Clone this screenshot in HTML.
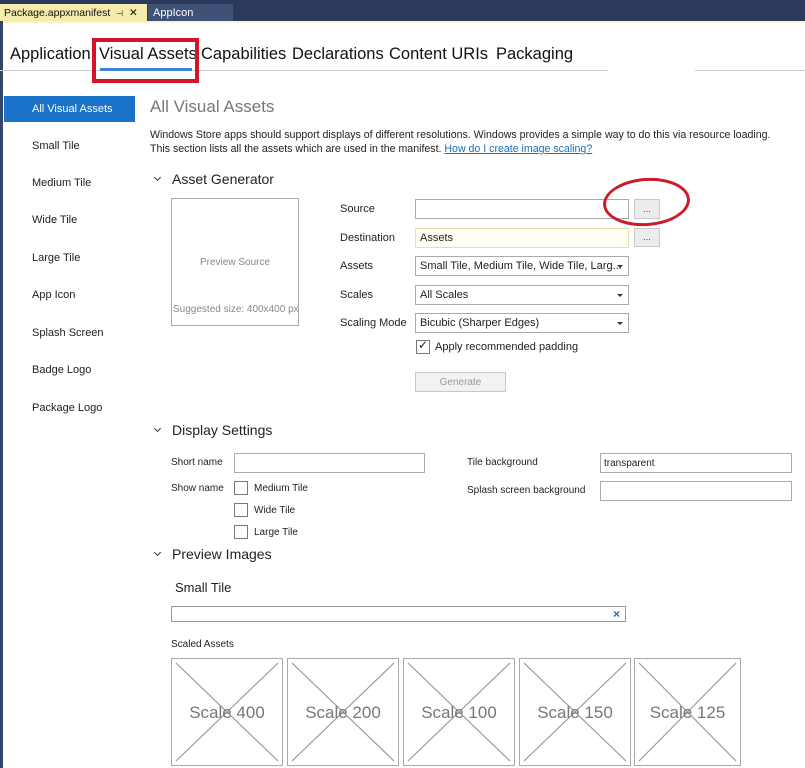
<!DOCTYPE html>
<html><head><meta charset="utf-8"><style>
*{margin:0;padding:0;box-sizing:border-box}
body{width:805px;height:768px;overflow:hidden;background:#fff;font-family:"Liberation Sans",sans-serif;color:#1e1e1e;position:relative}
.a{position:absolute;white-space:nowrap}
.s{font-size:11px}
.t{position:absolute;white-space:nowrap;top:45px;font-size:16.5px;color:#111}
.box{position:absolute;border:1px solid #b8b8b8;background:#fff}
.lbl{position:absolute;font-size:11px;white-space:nowrap}
.dd{position:absolute;border:1px solid #aaa;background:#fff;font-size:11px;padding:3px 4px;white-space:nowrap}
.dd:after{content:"";position:absolute;right:5px;top:8px;border-left:3px solid transparent;border-right:3px solid transparent;border-top:3px solid #333}
.btn{position:absolute;border:1px solid #c8c8c8;background:#ececec;font-size:9px;text-align:center;color:#444}
.cb{position:absolute;width:14px;height:14px;border:1px solid #777;background:#fff}
.chev{position:absolute;width:5px;height:5px;border-right:1.5px solid #333;border-bottom:1.5px solid #333;transform:rotate(45deg)}
.h2{position:absolute;font-size:14px;white-space:nowrap;color:#222}
.tile{position:absolute;top:658px;width:112px;height:108px;border:1px solid #a8a8a8}
.tile svg{position:absolute;left:0;top:0}
.tile span{position:absolute;left:0;right:0;top:44px;text-align:center;font-size:17px;color:#777}
</style></head><body>
<div class="a" style="left:0;top:0;width:805px;height:21px;background:#2b3a5c"></div>
<div class="a" style="left:0;top:4px;width:147px;height:18px;background:#f5ecab;font-size:10.5px;padding:3px 0 0 4px;color:#111">Package.appxmanifest <span style="font-size:8px;margin-left:3px">⊣</span> <span style="margin-left:3px">✕</span></div>
<div class="a" style="left:148px;top:4px;width:85px;height:17px;background:#3e5277;font-size:11px;padding:3px 0 0 5px;color:#fff">AppIcon</div>
<div class="a" style="left:0;top:21px;width:805px;height:2px;background:#f7f2d0"></div>
<div class="a" style="left:0;top:21px;width:3px;height:747px;background:#34456a"></div>
<div class="t" style="left:10px">Application</div>
<div class="t" style="left:99px">Visual Assets</div>
<div class="t" style="left:201px">Capabilities</div>
<div class="t" style="left:292px">Declarations</div>
<div class="t" style="left:389px">Content URIs</div>
<div class="t" style="left:496px">Packaging</div>
<div class="a" style="left:0;top:70px;width:608px;height:1px;background:#ccc"></div>
<div class="a" style="left:695px;top:70px;width:110px;height:1px;background:#ccc"></div>
<div class="a" style="left:100px;top:68px;width:92px;height:3px;background:#3c84d2"></div>
<div class="a" style="left:92px;top:38px;width:107px;height:45px;border:4px solid #d3142a"></div>
<div class="a" style="left:4px;top:96px;width:131px;height:26px;background:#1a73c8;color:#fff;font-size:11px;padding:7px 0 0 28px">All Visual Assets</div>
<div class="a s" style="left:32px;top:140px">Small Tile</div>
<div class="a s" style="left:32px;top:177px">Medium Tile</div>
<div class="a s" style="left:32px;top:214px">Wide Tile</div>
<div class="a s" style="left:32px;top:252px">Large Tile</div>
<div class="a s" style="left:32px;top:289px">App Icon</div>
<div class="a s" style="left:32px;top:327px">Splash Screen</div>
<div class="a s" style="left:32px;top:364px">Badge Logo</div>
<div class="a s" style="left:32px;top:402px">Package Logo</div>
<div class="a" style="left:150px;top:97px;font-size:17px;color:#777">All Visual Assets</div>
<div class="a" style="left:150px;top:128px;font-size:10.6px;line-height:14px;color:#222">Windows Store apps should support displays of different resolutions. Windows provides a simple way to do this via resource loading.<br>This section lists all the assets which are used in the manifest. <span style="color:#1a6fb8;text-decoration:underline">How do I create image scaling?</span></div>
<div class="chev" style="left:155px;top:175px"></div>
<div class="h2" style="left:172px;top:171px">Asset Generator</div>
<div class="box" style="left:171px;top:198px;width:128px;height:128px;border-color:#aaa"></div>
<div class="lbl" style="left:200px;top:257px;color:#888;font-size:10px">Preview Source</div>
<div class="lbl" style="left:173px;top:304px;color:#888;font-size:10px">Suggested size: 400x400 px</div>
<div class="lbl" style="left:340px;top:203px">Source</div>
<div class="lbl" style="left:340px;top:232px">Destination</div>
<div class="lbl" style="left:340px;top:260px">Assets</div>
<div class="lbl" style="left:340px;top:289px">Scales</div>
<div class="lbl" style="left:340px;top:317px">Scaling Mode</div>
<div class="box" style="left:415px;top:199px;width:214px;height:20px;border-color:#aaa"></div>
<div class="btn" style="left:634px;top:199px;width:26px;height:20px;padding-top:4px">...</div>
<div class="box" style="left:415px;top:228px;width:214px;height:20px;background:#fffff4;border-color:#e6dfb0;font-size:11px;padding:3px 4px">Assets</div>
<div class="btn" style="left:634px;top:228px;width:26px;height:19px;padding-top:3px">...</div>
<div class="dd" style="left:415px;top:256px;width:214px;height:20px">Small Tile, Medium Tile, Wide Tile, Larg...</div>
<div class="dd" style="left:415px;top:285px;width:214px;height:20px">All Scales</div>
<div class="dd" style="left:415px;top:313px;width:214px;height:20px">Bicubic (Sharper Edges)</div>
<div class="cb" style="left:416px;top:340px"></div>
<div class="a" style="left:418px;top:338px;font-size:12px">✓</div>
<div class="lbl" style="left:435px;top:341px">Apply recommended padding</div>
<div class="btn" style="left:415px;top:372px;width:91px;height:20px;padding-top:4px;font-size:10px;color:#999;background:#f2f2f2">Generate</div>
<div class="a" style="left:603px;top:178px;width:87px;height:48px;border:3px solid #cc1c2c;border-radius:50%;transform:rotate(-4deg)"></div>
<div class="chev" style="left:155px;top:426px"></div>
<div class="h2" style="left:172px;top:422px">Display Settings</div>
<div class="lbl" style="left:171px;top:457px;font-size:10px">Short name</div>
<div class="box" style="left:234px;top:453px;width:191px;height:20px;border-color:#aaa"></div>
<div class="lbl" style="left:171px;top:483px;font-size:10px">Show name</div>
<div class="cb" style="left:234px;top:481px"></div><div class="lbl" style="left:254px;top:483px;font-size:10px">Medium Tile</div>
<div class="cb" style="left:234px;top:503px"></div><div class="lbl" style="left:254px;top:505px;font-size:10px">Wide Tile</div>
<div class="cb" style="left:234px;top:525px"></div><div class="lbl" style="left:254px;top:527px;font-size:10px">Large Tile</div>
<div class="lbl" style="left:467px;top:457px;font-size:10px">Tile background</div>
<div class="box" style="left:600px;top:453px;width:192px;height:20px;border-color:#aaa;font-size:10px;padding:4px 3px">transparent</div>
<div class="lbl" style="left:467px;top:485px;font-size:10px">Splash screen background</div>
<div class="box" style="left:600px;top:481px;width:192px;height:20px;border-color:#aaa"></div>
<div class="chev" style="left:155px;top:550px"></div>
<div class="h2" style="left:172px;top:546px">Preview Images</div>
<div class="a" style="left:175px;top:580px;font-size:13px">Small Tile</div>
<div class="box" style="left:171px;top:606px;width:455px;height:16px;border-color:#999"></div>
<div class="a" style="left:613px;top:607px;font-size:12px;color:#2a6aa8;font-weight:bold">×</div>
<div class="lbl" style="left:171px;top:639px;font-size:10px">Scaled Assets</div>
<div class="tile" style="left:171px"><svg width="110" height="106"><path d="M4 4L106 102M106 4L4 102" stroke="#999" stroke-width="1.2"/></svg><span>Scale 400</span></div>
<div class="tile" style="left:287px"><svg width="110" height="106"><path d="M4 4L106 102M106 4L4 102" stroke="#999" stroke-width="1.2"/></svg><span>Scale 200</span></div>
<div class="tile" style="left:403px"><svg width="110" height="106"><path d="M4 4L106 102M106 4L4 102" stroke="#999" stroke-width="1.2"/></svg><span>Scale 100</span></div>
<div class="tile" style="left:519px"><svg width="110" height="106"><path d="M4 4L106 102M106 4L4 102" stroke="#999" stroke-width="1.2"/></svg><span>Scale 150</span></div>
<div class="tile" style="left:634px;width:107px"><svg width="105" height="106"><path d="M4 4L101 102M101 4L4 102" stroke="#999" stroke-width="1.2"/></svg><span>Scale 125</span></div>
</body></html>
